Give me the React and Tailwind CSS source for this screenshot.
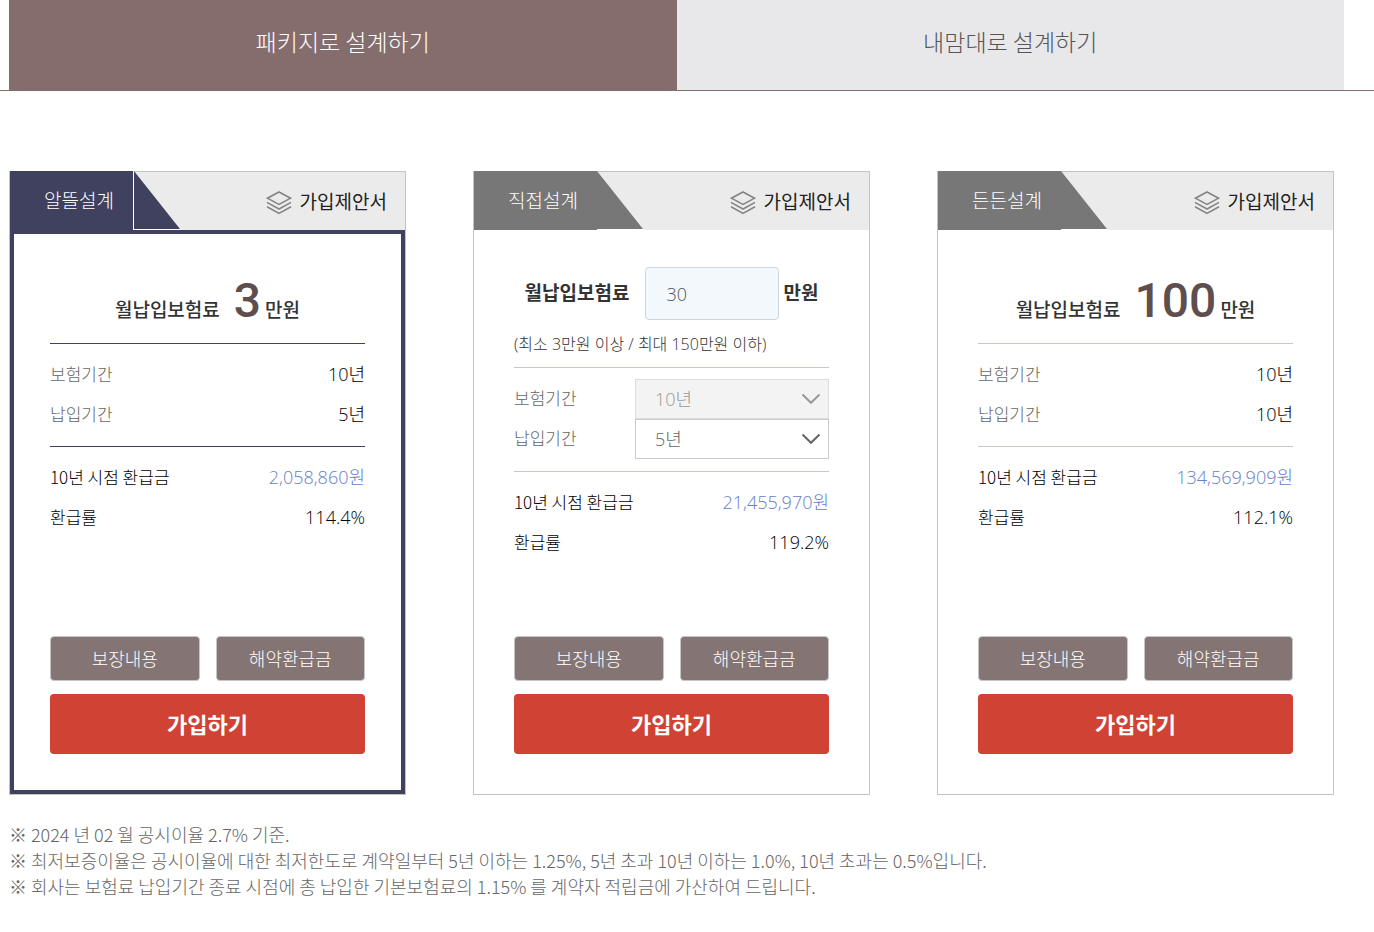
import { useState } from "react";

const TABS = ["패키지로 설계하기", "내맘대로 설계하기"];

const NOTES = [
  "※ 2024 년 02 월 공시이율 2.7% 기준.",
  "※ 최저보증이율은 공시이율에 대한 최저한도로 계약일부터 5년 이하는 1.25%, 5년 초과 10년 이하는 1.0%, 10년 초과는 0.5%입니다.",
  "※ 회사는 보험료 납입기간 종료 시점에 총 납입한 기본보험료의 1.15% 를 계약자 적립금에 가산하여 드립니다.",
];

function LayersIcon() {
  return (
    <svg width="26" height="24" viewBox="0 0 26 24" fill="none" stroke="#858585" strokeWidth="1.6" aria-hidden="true">
      <path d="M13 1 L24.6 7.2 L13 13.4 L1.4 7.2 Z" />
      <path d="M1 11.4 L13 18 L25 11.4" />
      <path d="M1 15.8 L13 22.4 L25 15.8" />
    </svg>
  );
}

function Chevron() {
  return (
    <svg className="pointer-events-none absolute top-3.5 right-2" width="20" height="12" viewBox="0 0 20 12" fill="none" stroke="currentColor" strokeWidth="2" aria-hidden="true">
      <path d="M1.5 1.5 L10 9.8 L18.5 1.5" />
    </svg>
  );
}

function CardHeader({ name, active }) {
  return (
    <div className="flex h-[58px] bg-[#ebebeb]">
      <h2
        className={
          active
            ? "-mt-px h-[59px] w-[124px] border-r border-white bg-[#40415f] pl-[34px] text-[19px] leading-[57px] font-light text-white"
            : "-mt-px h-[59px] w-[123px] bg-[#777777] pl-[34px] text-[19px] leading-[57px] font-light text-white"
        }
      >
        {name}
      </h2>
      <svg
        className={active ? "-mt-px text-[#40415f]" : "-mt-px text-[#777777]"}
        width="46"
        height="59"
        viewBox="0 0 46 59"
        aria-hidden="true"
      >
        <path d="M0 0 L46 58 H0 Z" fill="currentColor" />
        <path d="M0 58.5 H46" stroke="#ffffff" />
      </svg>
      <button type="button" className="mr-[18px] ml-auto flex items-center gap-2 text-[19px] leading-6 font-normal text-[#222222]">
        <span className="pt-1">
          <LayersIcon />
        </span>
        가입제안서
      </button>
    </div>
  );
}

function Row({ label, value, labelClass, valueClass }) {
  return (
    <div className="flex h-10 items-center justify-between">
      <dt className={labelClass}>{label}</dt>
      <dd className={valueClass}>{value}</dd>
    </div>
  );
}

function PeriodSelect({ id, label, value, disabled }) {
  return (
    <div className="flex h-10 justify-between">
      <label htmlFor={id} className="text-[17px] leading-[38px] text-[#666666]">
        {label}
      </label>
      <div className={disabled ? "relative w-[194px] text-[#999999]" : "relative w-[194px] text-[#666666]"}>
        <select
          id={id}
          defaultValue={value}
          disabled={disabled}
          className="h-10 w-full appearance-none border border-[#cccccc] bg-white pl-[19px] font-['Open_Sans','Noto_Sans_CJK_KR',sans-serif] text-lg disabled:border-[#dddddd] disabled:bg-[#f3f3f3] disabled:opacity-100"
        >
          <option>{value}</option>
        </select>
        <Chevron />
      </div>
    </div>
  );
}

function FixedPremium({ amount }) {
  return (
    <p className="flex items-baseline justify-center pt-[43px] pb-[18px] text-[19px] leading-5 font-medium text-[#333333]">
      월납입보험료
      <strong className="mr-1 ml-3.5 font-['Roboto'] text-5xl leading-12 font-medium text-[#5f4e4e]">{amount}</strong>
      만원
    </p>
  );
}

function CustomPremium() {
  const [amount, setAmount] = useState("30");

  return (
    <div className="pt-[33px] pb-[11px]">
      <div className="flex items-center justify-center text-[19px] leading-5 font-bold text-[#333333]">
        <label htmlFor="premium" className="pb-1">
          월납입보험료
        </label>
        <input
          id="premium"
          type="text"
          value={amount}
          onChange={(e) => setAmount(e.target.value)}
          className="mr-1 ml-4 h-[53px] w-[134px] rounded border border-[#cdd5da] bg-[#f3f8fd] px-5 font-['Open_Sans','Noto_Sans_CJK_KR',sans-serif] text-lg font-light text-[#555555]"
        />
        <span className="pb-1">만원</span>
      </div>
      <p className="mt-3 font-['Open_Sans','Noto_Sans_CJK_KR',sans-serif] text-base leading-6 text-[#333333]">
        (최소 3만원 이상 / 최대 150만원 이하)
      </p>
    </div>
  );
}

function PlanCard({ plan }) {
  const line = plan.active ? "border-[#40415f]" : "border-[#c9c8bf]";
  const label = "text-[17px] text-[#666666]";
  const value = "font-['Open_Sans','Noto_Sans_CJK_KR',sans-serif] text-lg text-black";

  return (
    <article className="flex flex-col border border-[#c3c3c5] font-light">
      <CardHeader name={plan.name} active={plan.active} />
      <div
        className={
          plan.active
            ? "flex min-h-[564px] flex-col border-4 border-[#40415f] px-9 pb-9"
            : "flex min-h-[564px] flex-col border-4 border-white px-9 pb-9"
        }
      >
        {plan.custom ? <CustomPremium /> : <FixedPremium amount={plan.amount} />}

        {plan.custom ? (
          <div className={`border-y pt-[11px] pb-3 ${line}`}>
            <PeriodSelect id="term" label="보험기간" value={plan.term} disabled />
            <PeriodSelect id="pay" label="납입기간" value={plan.pay} />
          </div>
        ) : (
          <dl className={`border-y pt-2.5 pb-3 ${line}`}>
            <Row label="보험기간" value={plan.term} labelClass={label} valueClass={value} />
            <Row label="납입기간" value={plan.pay} labelClass={label} valueClass={value} />
          </dl>
        )}

        <dl className="pt-2.5">
          <Row
            label="10년 시점 환급금"
            value={plan.refund}
            labelClass="text-[17px] text-black"
            valueClass="font-['Open_Sans','Noto_Sans_CJK_KR',sans-serif] text-lg text-[#6680c8]"
          />
          <Row label="환급률" value={plan.rate} labelClass="text-[17px] text-black" valueClass={value} />
        </dl>

        <div className="mt-auto grid grid-cols-2 gap-4 text-lg text-white">
          <button type="button" className="h-[45px] rounded-sm border border-[#c9c5c5] bg-[#857474] pb-0.5">
            보장내용
          </button>
          <button type="button" className="h-[45px] rounded-sm border border-[#c9c5c5] bg-[#857474] pb-0.5">
            해약환급금
          </button>
        </div>
        <button type="button" className="mt-[13px] h-[60px] rounded bg-[#cf4234] pb-0.5 text-[22px] font-bold text-white">
          가입하기
        </button>
      </div>
    </article>
  );
}

const PLANS = [
  { name: "알뜰설계", active: true, amount: "3", term: "10년", pay: "5년", refund: "2,058,860원", rate: "114.4%" },
  { name: "직접설계", custom: true, term: "10년", pay: "5년", refund: "21,455,970원", rate: "119.2%" },
  { name: "든든설계", amount: "100", term: "10년", pay: "10년", refund: "134,569,909원", rate: "112.1%" },
];

export default function App() {
  const [tab, setTab] = useState(0);

  return (
    <main className="bg-white font-['Noto_Sans_CJK_KR',sans-serif]">
      <nav className="grid grid-cols-2 border-b border-[#866d6d] pr-[30px] pl-[9px]">
        {TABS.map((name, i) => (
          <button
            key={name}
            type="button"
            onClick={() => setTab(i)}
            className={
              i === tab
                ? "h-[90px] bg-[#866d6d] pb-2 text-[23px] font-light text-white"
                : "h-[90px] bg-[#e8e8ea] pb-2 text-[23px] font-light text-[#555555]"
            }
          >
            {name}
          </button>
        ))}
      </nav>

      <section className="grid grid-cols-3 gap-[67px] pt-20 pr-10 pl-[9px]">
        {PLANS.map((plan) => (
          <PlanCard key={plan.name} plan={plan} />
        ))}
      </section>

      <ul className="mt-[26px] pr-10 pb-8 pl-[9px] text-lg leading-[26px] font-light text-[#666666]">
        {NOTES.map((note) => (
          <li key={note}>{note}</li>
        ))}
      </ul>
    </main>
  );
}
